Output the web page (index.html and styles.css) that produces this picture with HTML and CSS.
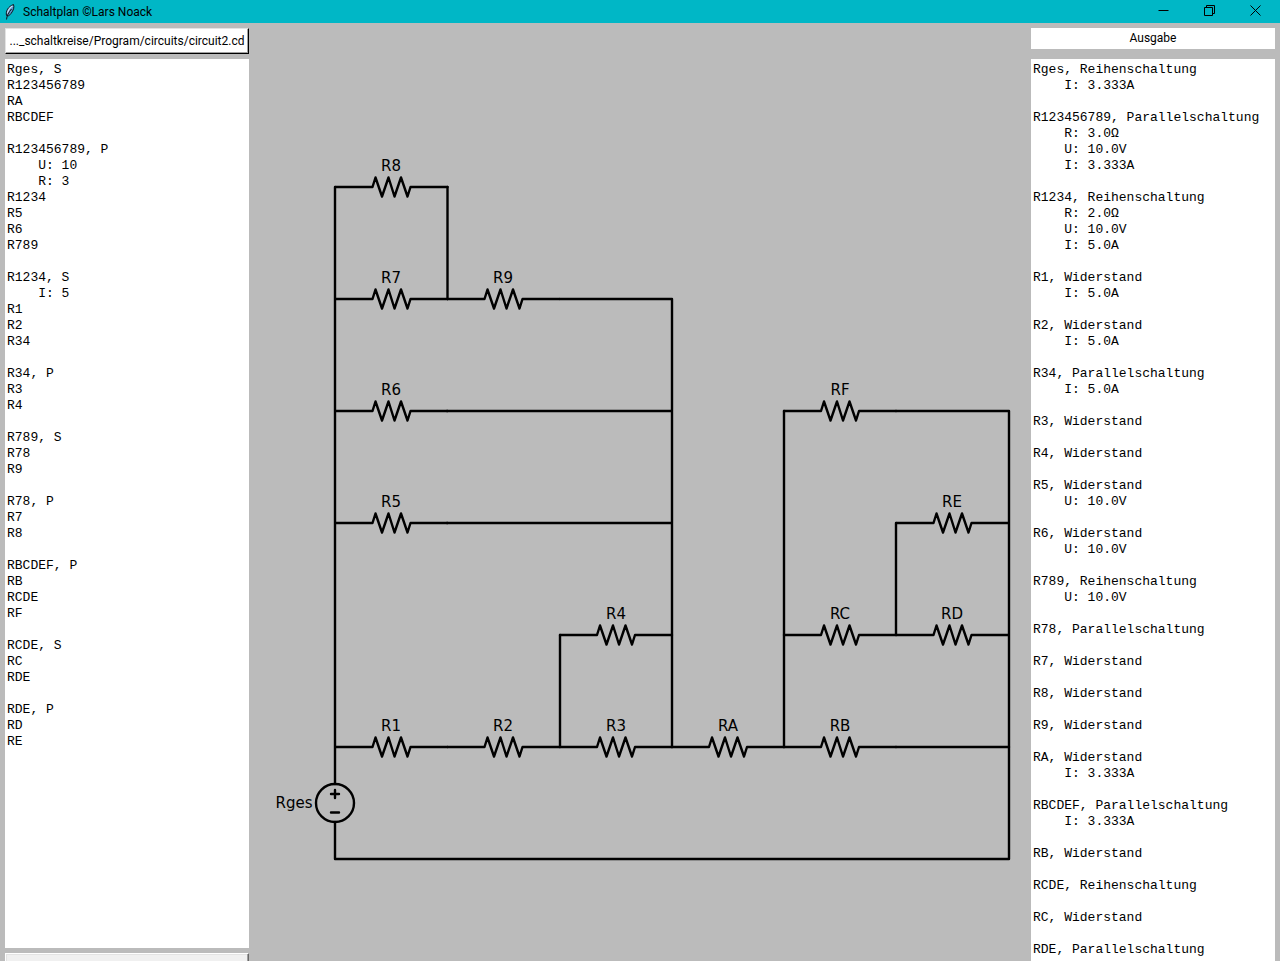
FILE: index.html
```html
<!DOCTYPE html>
<html lang="de">
<head>
<meta charset="utf-8">
<meta name="viewport" content="width=device-width, initial-scale=1">
<title>Schaltplan ©Lars Noack</title>
<link rel="stylesheet" href="styles.css">
</head>
<body class="app">
<header class="titlebar">
  <svg class="titlebar-icon" viewBox="0 0 16 16" aria-hidden="true">
    <path d="M4.500 11.500C3.500 7.500 6 2.500 11.500 0.500C12.500 3 11.500 6.500 9 9.500L6.500 12Z" fill="#5b93c9" stroke="#10141c" stroke-width="1"/>
    <path d="M5.500 9.500C6 6.500 8 3.500 10.500 2" fill="none" stroke="#cfe4f4" stroke-width="1.200"/>
    <path d="M4.500 15.500C4.800 12 6.500 8.500 9.500 5" fill="none" stroke="#10141c" stroke-width="1"/>
  </svg>
  <h1 class="titlebar-text">Schaltplan ©Lars Noack</h1>
  <div class="window-controls">
    <button class="window-button" type="button" aria-label="Minimieren"><svg viewBox="0 0 11 11"><path d="M0.500 5.500H10.500"/></svg></button>
    <button class="window-button" type="button" aria-label="Wiederherstellen"><svg viewBox="0 0 11 11"><path d="M0.500 2.500H8.500V10.500H0.500ZM2.500 2.500V0.500H10.500V8.500H8.500"/></svg></button>
    <button class="window-button" type="button" aria-label="Schließen"><svg viewBox="0 0 11 11"><path d="M0.500 0.500L10.500 10.500M10.500 0.500L0.500 10.500"/></svg></button>
  </div>
</header>
<main class="workspace">
  <section class="panel panel-input">
    <button class="file-button" type="button">..._schaltkreise/Program/circuits/circuit2.cd</button>
    <textarea class="text-area" rows="55" aria-label="Schaltkreis" spellcheck="false">
Rges, S
R123456789
RA
RBCDEF

R123456789, P
    U: 10
    R: 3
R1234
R5
R6
R789

R1234, S
    I: 5
R1
R2
R34

R34, P
R3
R4

R789, S
R78
R9

R78, P
R7
R8

RBCDEF, P
RB
RCDE
RF

RCDE, S
RC
RDE

RDE, P
RD
RE</textarea>
    <button class="run-button" type="button" aria-label="Berechnen"></button>
  </section>
  <section class="canvas">
    <svg class="circuit" viewBox="0 0 782 938" role="img" aria-label="Schaltplan">
      <defs>
        <path id="resistor" d="M-56 0H-19L-16 -9.500L-9.500 9.500L-3 -9.500L3 9.500L9.500 -9.500L16 9.500L19 0H56"/>
      </defs>
      <g class="wires">
        <path d="M86 761V164M198.500 164V276M311 276H423V724M198 388H423M198 500H423"/>
        <path d="M311 724V612M535 724V388M647 388H760V836H86V799"/>
        <path d="M647 612V500M647 724H760"/>
        <use href="#resistor" x="142.500" y="164"/>
        <use href="#resistor" x="142.500" y="276"/>
        <use href="#resistor" x="254.500" y="276"/>
        <use href="#resistor" x="142.500" y="388"/>
        <use href="#resistor" x="142.500" y="500"/>
        <use href="#resistor" x="367" y="612"/>
        <use href="#resistor" x="142.500" y="724"/>
        <use href="#resistor" x="254.500" y="724"/>
        <use href="#resistor" x="367" y="724"/>
        <use href="#resistor" x="479" y="724"/>
        <use href="#resistor" x="591" y="724"/>
        <use href="#resistor" x="591" y="612"/>
        <use href="#resistor" x="703.500" y="612"/>
        <use href="#resistor" x="703.500" y="500"/>
        <use href="#resistor" x="591" y="388"/>
        <circle cx="86" cy="780" r="19"/>
        <path class="sign" d="M82 771H90M86 767V775M82 789.500H90"/>
      </g>
      <g class="labels">
        <text x="142" y="148">R8</text>
        <text x="142" y="260">R7</text>
        <text x="254" y="260">R9</text>
        <text x="142" y="372">R6</text>
        <text x="142" y="484">R5</text>
        <text x="367" y="596">R4</text>
        <text x="142" y="708">R1</text>
        <text x="254" y="708">R2</text>
        <text x="367" y="708">R3</text>
        <text x="479" y="708">RA</text>
        <text x="591" y="708">RB</text>
        <text x="591" y="596">RC</text>
        <text x="703" y="596">RD</text>
        <text x="703" y="484">RE</text>
        <text x="591" y="372">RF</text>
        <text x="45" y="785">Rges</text>
      </g>
    </svg>
  </section>
  <section class="panel panel-output">
    <h2 class="output-title">Ausgabe</h2>
    <pre class="text-area output">Rges, Reihenschaltung
    I: 3.333A

R123456789, Parallelschaltung
    R: 3.0Ω
    U: 10.0V
    I: 3.333A

R1234, Reihenschaltung
    R: 2.0Ω
    U: 10.0V
    I: 5.0A

R1, Widerstand
    I: 5.0A

R2, Widerstand
    I: 5.0A

R34, Parallelschaltung
    I: 5.0A

R3, Widerstand

R4, Widerstand

R5, Widerstand
    U: 10.0V

R6, Widerstand
    U: 10.0V

R789, Reihenschaltung
    U: 10.0V

R78, Parallelschaltung

R7, Widerstand

R8, Widerstand

R9, Widerstand

RA, Widerstand
    I: 3.333A

RBCDEF, Parallelschaltung
    I: 3.333A

RB, Widerstand

RCDE, Reihenschaltung

RC, Widerstand

RDE, Parallelschaltung</pre>
  </section>
</main>
</body>
</html>
```

FILE: styles.css
```css
* {
  box-sizing: border-box;
}

.app {
  margin: 0;
  height: 100vh;
  overflow: hidden;
  display: flex;
  flex-direction: column;
  background: #bbbbbb;
  color: #000000;
  font-family: Roboto, "Open Sans", sans-serif;
  font-size: 12px;
}

.titlebar {
  display: flex;
  align-items: center;
  flex: none;
  height: 23px;
  padding-left: 2px;
  background: #00b7c6;
}

.titlebar-icon {
  width: 16px;
  height: 16px;
  margin-right: 5px;
}

.titlebar-text {
  margin: 0;
  font-size: 12px;
  font-weight: 400;
  line-height: 16px;
}

.window-controls {
  display: flex;
  align-self: stretch;
  margin-left: auto;
  padding-right: 2px;
}

.window-button {
  display: flex;
  align-items: center;
  justify-content: center;
  width: 46px;
  padding: 0 0 2px;
  border: 0;
  background: transparent;
}

.window-button svg {
  width: 11px;
  height: 11px;
  fill: none;
  stroke: #000000;
  stroke-width: 1;
}

.workspace {
  display: grid;
  grid-template-columns: 244px minmax(0, 1fr) 244px;
  flex: 1;
  min-height: 0;
  padding: 5px 5px 0;
}

.panel {
  display: flex;
  flex-direction: column;
  min-height: 0;
}

.panel-input {
  gap: 5px;
}

.panel-output {
  gap: 10px;
}

.file-button {
  flex: none;
  height: 26px;
  padding: 0;
  border: 1px solid;
  border-color: #e3e3e3 #000000 #000000 #e3e3e3;
  box-shadow: inset -1px -1px #a0a0a0;
  background: #ffffff;
  color: inherit;
  font: inherit;
  white-space: nowrap;
}

.text-area {
  display: block;
  flex: none;
  width: 100%;
  margin: 0;
  padding: 3px 2px 6px;
  border: 0;
  outline: 0;
  resize: none;
  overflow: hidden;
  background: #ffffff;
  color: #000000;
  font-family: "Liberation Mono", "Courier New", monospace;
  font-size: 13px;
  line-height: 16px;
}

.run-button {
  flex: none;
  height: 26px;
  border: 1px solid;
  border-color: #ffffff #696969 #696969 #ffffff;
  box-shadow: inset -1px -1px #a0a0a0, inset 1px 1px #e3e3e3;
  background: #f0f0f0;
}

.output-title {
  flex: none;
  margin: 0;
  background: #ffffff;
  font-size: 12px;
  font-weight: 400;
  line-height: 21px;
  text-align: center;
}

.canvas {
  margin-top: -5px;
}

.circuit {
  display: block;
  width: 100%;
  max-height: 100vh;
}

.wires {
  fill: none;
  stroke: #000000;
  stroke-width: 2.4;
  stroke-linejoin: round;
  stroke-linecap: round;
}

.labels {
  font-family: "DejaVu Sans", sans-serif;
  font-size: 15px;
  text-anchor: middle;
}
```
